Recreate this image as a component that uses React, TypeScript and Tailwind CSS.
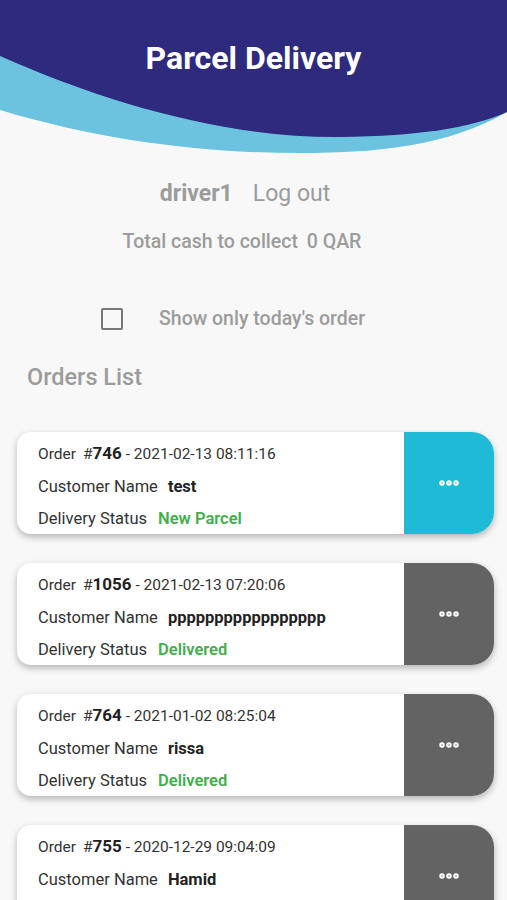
import { MoreHorizontal } from 'lucide-react';

type Order = {
  id: string;
  date: string;
  customer: string;
  status?: string;
  active?: boolean;
};

const orders: Order[] = [
  { id: '746', date: '2021-02-13 08:11:16', customer: 'test', status: 'New Parcel', active: true },
  { id: '1056', date: '2021-02-13 07:20:06', customer: 'ppppppppppppppppp', status: 'Delivered' },
  { id: '764', date: '2021-01-02 08:25:04', customer: 'rissa', status: 'Delivered' },
  { id: '755', date: '2020-12-29 09:04:09', customer: 'Hamid', status: 'Delivered' },
];

const Header = () => (
  <div className="relative h-[165px] w-full">
    <svg className="absolute inset-0" width="507" height="165" viewBox="0 0 507 165">
      <path
        d="M0 56 L0 110 C100 140 200 153 300 153 C380 153 450 145 507 112 L507 100 Z"
        fill="#6cc3df"
      />
      <path
        d="M0 0 H507 V112 C470 128 420 136 340 137 C230 138 110 105 0 56 Z"
        fill="#2e2a7e"
      />
    </svg>
    <h1 className="relative pt-[37px] text-center text-[32px] font-bold leading-[42px] text-white">
      Parcel Delivery
    </h1>
  </div>
);

const OrderCard = ({ order }: { order: Order }) => (
  <div className="flex h-[102px] rounded-l-[14px] rounded-r-[22px] bg-white shadow-[0_3px_7px_rgba(0,0,0,0.28)]">
    <div className="flex flex-1 flex-col gap-[8.5px] pt-[9px] pl-[21px] text-[16.5px] text-[#333]">
      <div className="leading-[24px]">
        <span className="text-[15.5px]">Order</span>
        <span className="ml-[7px] text-[15.5px]">#</span>
        <span className="text-[17px] font-bold text-[#222]">{order.id}</span>
        <span className="text-[15.5px]"> - {order.date}</span>
      </div>
      <div className="leading-[24px]">
        Customer Name
        <span className="ml-[10px] font-bold text-[#222]">{order.customer}</span>
      </div>
      <div className="leading-[24px]">
        Delivery Status
        <span className="ml-[11px] font-semibold text-[#43ae4b]">{order.status}</span>
      </div>
    </div>
    <button
      className={
        order.active
          ? 'flex w-[90px] items-center justify-center rounded-r-[22px] bg-[#1fbbd6] text-white'
          : 'flex w-[90px] items-center justify-center rounded-r-[22px] bg-[#636363] text-white'
      }
    >
      <MoreHorizontal size={24} strokeWidth={3.5} />
    </button>
  </div>
);

export default function App() {
  return (
    <div className="h-[900px] w-[507px] overflow-hidden bg-[#f8f8f8] font-['Roboto',sans-serif]">
      <Header />

      {/* user + totals */}
      <div className="mt-[14px] flex justify-center gap-[20px] pr-[17px] text-[23px] leading-[30px] text-[#9c9c9c]">
        <span className="font-bold">driver1</span>
        <span>Log out</span>
      </div>
      <div className="mt-[21px] pr-[23px] text-center text-[19.5px] font-medium leading-[24px] text-[#9c9c9c]">
        Total cash to collect <span className="ml-[4px]">0 QAR</span>
      </div>

      {/* filter */}
      <div className="mt-[53px] flex items-center pl-[101px]">
        <div className="h-[22px] w-[22px] rounded-[2px] border-2 border-[#777]" />
        <span className="ml-[36px] text-[19.5px] font-medium leading-[24px] text-[#9c9c9c]">
          Show only today's order
        </span>
      </div>

      <h2 className="mt-[31px] pl-[27px] text-[23.5px] font-medium leading-[30px] text-[#9c9c9c]">Orders List</h2>

      <div className="mt-[40px] flex flex-col gap-[29px] pl-[17px] pr-[13px]">
        {orders.map((o) => (
          <OrderCard key={o.id} order={o} />
        ))}
      </div>
    </div>
  );
}
